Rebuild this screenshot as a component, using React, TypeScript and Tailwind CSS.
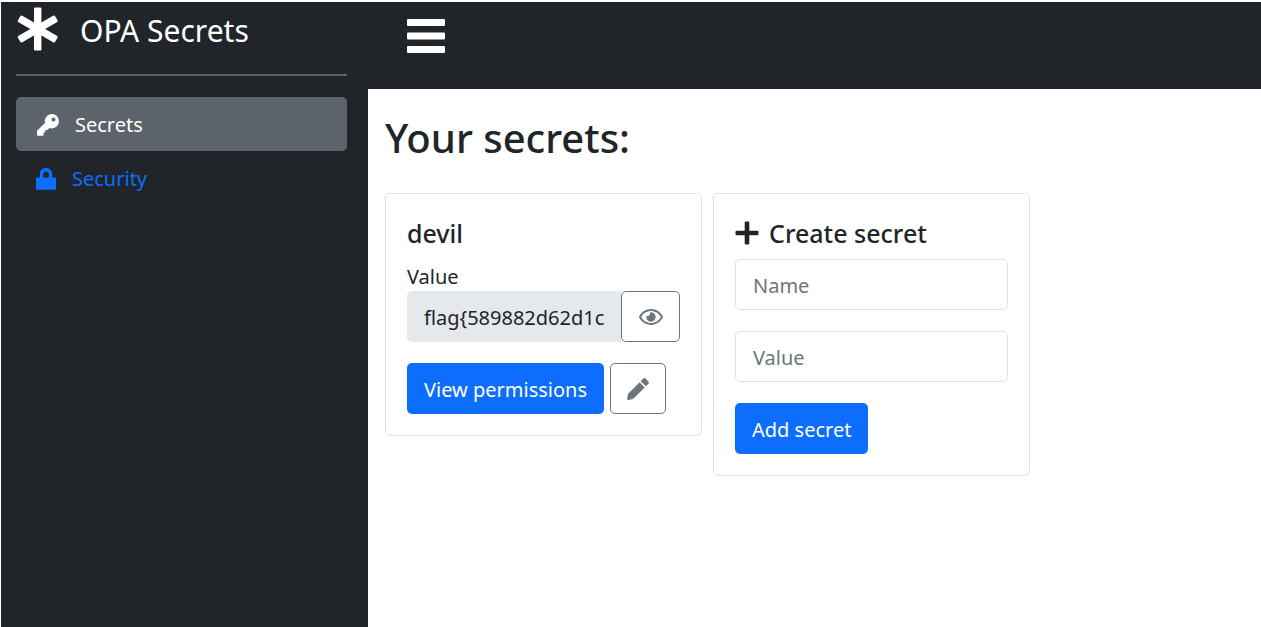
import type { ReactNode } from "react";
import { FaRegEye } from "react-icons/fa";

function AsteriskLogo() {
  return (
    <svg viewBox="0 0 42 44" className="h-11 w-[42px] shrink-0" fill="currentColor" aria-hidden="true">
      <rect x="18" y="0.5" width="7.4" height="43" rx="1.2" />
      <rect x="18" y="0.5" width="7.4" height="43" rx="1.6" transform="rotate(60 21.7 22)" />
      <rect x="18" y="0.5" width="7.4" height="43" rx="1.6" transform="rotate(-60 21.7 22)" />
    </svg>
  );
}

function MenuIcon() {
  return (
    <svg viewBox="0 0 38 34" className="h-[34px] w-[38px]" fill="currentColor" aria-hidden="true">
      <rect width="38" height="7" rx="1" />
      <rect y="13.5" width="38" height="7" rx="1" />
      <rect y="27" width="38" height="7" rx="1" />
    </svg>
  );
}

function KeyIcon() {
  return (
    <svg viewBox="0 0 22 22" className="size-[22px]" fill="currentColor" aria-hidden="true">
      <path
        fillRule="evenodd"
        d="M14.8 0a7.2 7.2 0 0 1 0 14.4c-.9 0-1.7-.1-2.4-.4L10.5 16H8.3v2.2H6.6V21q0 .8-.8.8H.8Q0 21.8 0 21v-3.6q0-.5.3-.8L8 9A7.2 7.2 0 0 1 14.8 0ZM16.5 3.4a2 2 0 1 0 0 4a2 2 0 0 0 0-4Z"
      />
    </svg>
  );
}

function LockIcon() {
  return (
    <svg viewBox="0 0 20 22" className="h-[22px] w-5" fill="currentColor" aria-hidden="true">
      <path
        fillRule="evenodd"
        d="M.8 9.6H3.8V6.5C3.8 2.6 6.3 0 10 0s6.2 2.6 6.2 6.5v3.1h3q.8 0 .8.8v10.5q0 .8-.8.8H.8q-.8 0-.8-.8V10.4q0-.8.8-.8ZM7.2 9.6h5.6V6.5C12.8 4.6 11.7 3.4 10 3.4S7.2 4.6 7.2 6.5Z"
      />
    </svg>
  );
}

function PencilIcon() {
  return (
    <svg viewBox="0 0 22 22" className="size-[22px]" fill="currentColor" aria-hidden="true">
      <path d="M12.6 4.3 17.7 9.4 6 21.1 1.2 21.9Q.1 22 .2 20.9L.9 16Z" />
      <path d="M13.7 3.2 16.3.6q1.1-1 2.2 0l2.9 2.9q1 1.1 0 2.2L18.8 8.3Z" />
    </svg>
  );
}

function PlusIcon() {
  return (
    <svg viewBox="0 0 24 24" className="size-6" fill="currentColor" aria-hidden="true">
      <rect x="9.7" y="0.5" width="4.6" height="23" rx="1" />
      <rect x="0.5" y="9.7" width="23" height="4.6" rx="1" />
    </svg>
  );
}

function Card({ children }: { children: ReactNode }) {
  return <section className="w-[317px] rounded-[5px] border border-[#dfe2e5] px-[21px] pt-[23px] pb-[21px]">{children}</section>;
}

const field =
  "h-[51px] w-full min-w-0 rounded-[5px] border border-[#dee2e6] px-[17px] pt-0.5 text-xl text-[#212529] placeholder:text-[#6c757d]";
const primary = "h-[51px] rounded-[5px] bg-[#0d6efd] px-[17px] pt-0.5 text-xl whitespace-nowrap text-white";
const outline =
  "flex h-[51px] items-center justify-center rounded-[5px] border border-[#6c757d] bg-white text-[#6c757d]";

export default function App() {
  return (
    <div className="flex min-h-screen bg-white pt-0.5 pl-px font-['Noto_Sans',sans-serif] text-xl text-[#212529]">
      <aside className="w-[367px] shrink-0 bg-[#212529] pt-0.5 pr-[21px] pl-[15px] text-white">
        <a href="#home" className="flex items-center gap-[22px] text-[30px] leading-[46px]">
          <AsteriskLogo />
          <span className="pt-1">OPA Secrets</span>
        </a>
        <hr className="mt-5 mb-[21px] border-t-2 border-[#5c636a]" />
        <nav>
          <a href="#secrets" className="flex h-[54px] items-center gap-4 rounded-[5px] bg-[#5c636a] px-[21px] pt-0.5">
            <KeyIcon />
            <span>Secrets</span>
          </a>
          <a href="#security" className="flex h-[54px] items-center gap-4 px-5 pt-0.5 text-[#0d6efd]">
            <LockIcon />
            <span>Security</span>
          </a>
        </nav>
      </aside>
      <div className="min-w-0 grow">
        <header className="h-[87px] bg-[#212529] px-[39px] pt-[17px] text-white">
          <button type="button" aria-label="Toggle menu" className="block">
            <MenuIcon />
          </button>
        </header>
        <main className="px-[17px] pt-[23px]">
          <h1 className="text-[40px] leading-[52px] font-medium">Your secrets:</h1>
          <div className="mt-[29px] flex flex-wrap items-start gap-[11px]">
            <Card>
              <h2 className="text-[25px] leading-8 font-medium">devil</h2>
              <label htmlFor="secret-value" className="mt-[13px] block leading-[29px]">
                Value
              </label>
              <div className="flex">
                <input
                  id="secret-value"
                  readOnly
                  value="flag{589882d62d1c"
                  className="h-[51px] w-[214px] min-w-0 rounded-l-[5px] bg-[#e6e9ec] pt-0.5 pl-[17px] text-xl"
                />
                <button type="button" aria-label="Show value" className={`${outline} grow`}>
                  <FaRegEye className="size-6" />
                </button>
              </div>
              <div className="mt-[21px] flex gap-1.5">
                <button type="button" className={primary}>View permissions</button>
                <button type="button" aria-label="Edit secret" className={`${outline} w-14`}>
                  <PencilIcon />
                </button>
              </div>
            </Card>
            <Card>
              <h2 className="flex items-center gap-2.5 text-[25px] leading-8 font-medium">
                <PlusIcon />
                Create secret
              </h2>
              <form className="mt-2.5 flex flex-col items-start gap-[21px]">
                <input aria-label="Name" placeholder="Name" className={field} />
                <input aria-label="Value" placeholder="Value" className={field} />
                <button type="button" className={primary}>Add secret</button>
              </form>
            </Card>
          </div>
        </main>
      </div>
    </div>
  );
}
